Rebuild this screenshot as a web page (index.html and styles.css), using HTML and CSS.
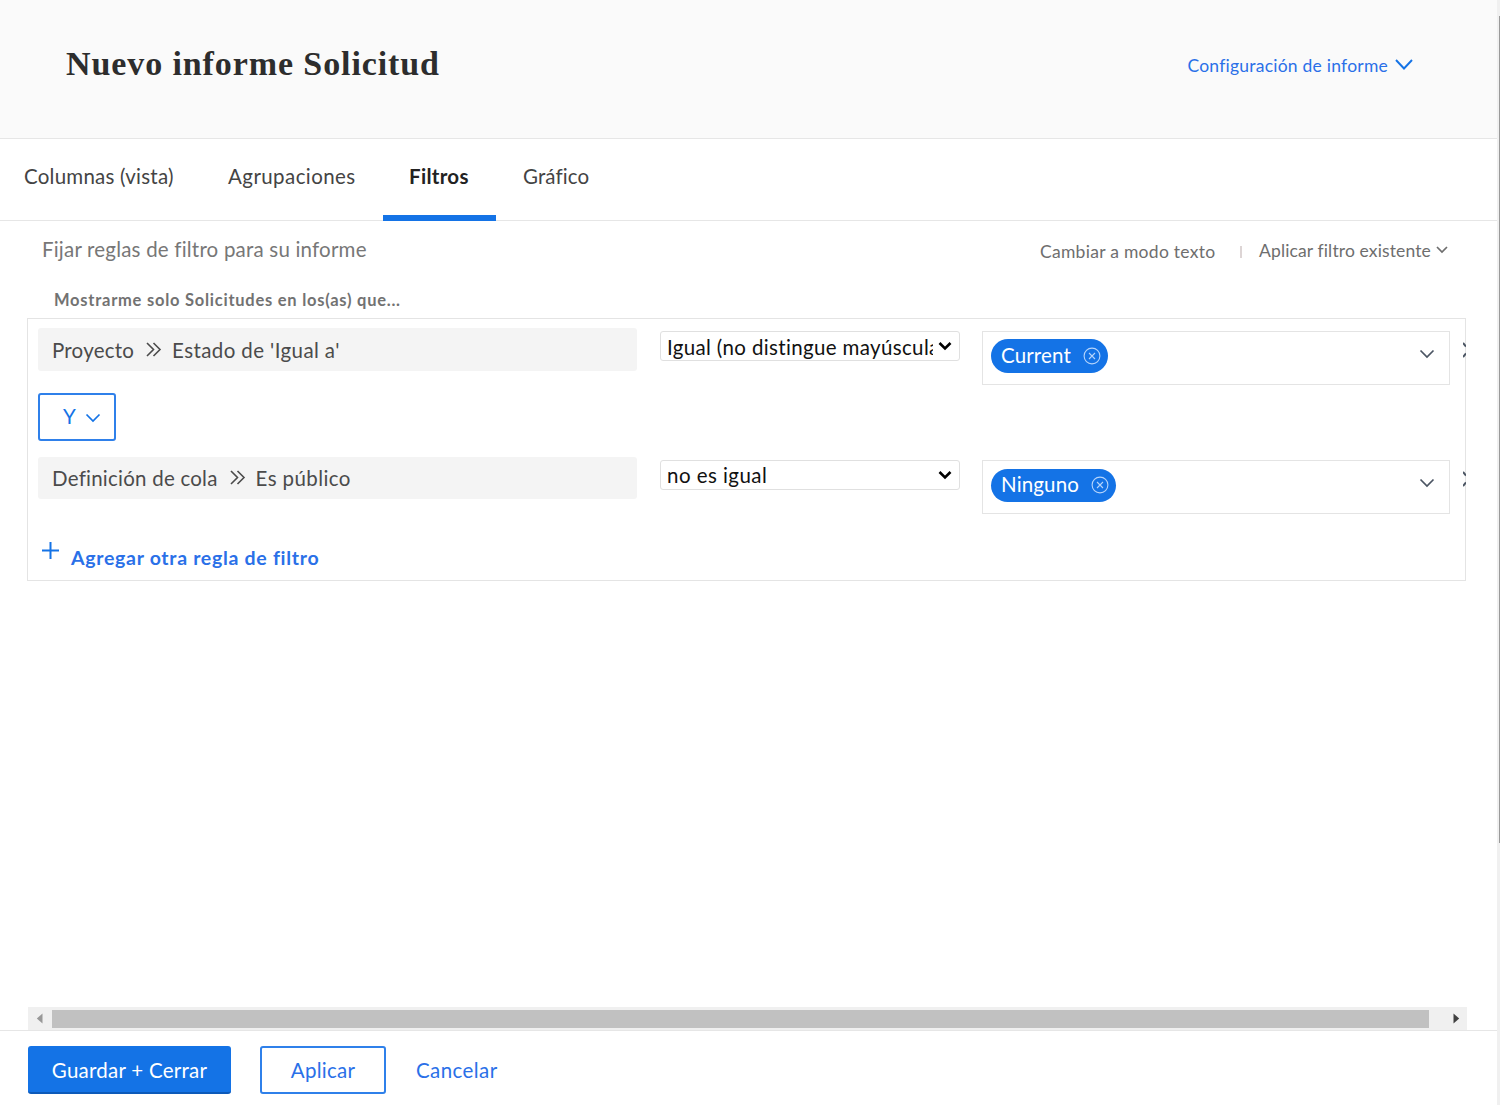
FILE: index.html
```html
<!DOCTYPE html>
<html lang="es">
<head>
<meta charset="utf-8">
<title>Nuevo informe Solicitud</title>
<link rel="stylesheet" href="styles.css">
</head>
<body>
<div class="app">
  <div class="page">
    <header class="header">
      <h1 class="title">Nuevo informe Solicitud</h1>
      <a class="settings"><span>Configuración de informe</span>
        <svg width="18" height="12" viewBox="0 0 18 12"><path d="M1 1l8 8.500L17 1" fill="none" stroke="currentColor" stroke-width="1.9"/></svg></a>
    </header>
    <nav class="tabs">
      <a class="tab tab-columns">Columnas (vista)</a>
      <a class="tab tab-groups">Agrupaciones</a>
      <a class="tab tab-filters active">Filtros</a>
      <a class="tab tab-chart">Gráfico</a>
    </nav>
    <main class="content">
      <div class="intro">
        <p class="intro-text">Fijar reglas de filtro para su informe</p>
        <a class="mode">Cambiar a modo texto</a>
        <i class="divider"></i>
        <a class="existing"><span>Aplicar filtro existente</span>
          <svg width="12" height="8" viewBox="0 0 12 8"><path d="M1 1l5 5 5-5" fill="none" stroke="currentColor" stroke-width="1.7"/></svg></a>
      </div>
      <p class="lead">Mostrarme solo Solicitudes en los(as) que...</p>
      <section class="rules">
        <div class="rule">
          <div class="field"><span class="entity">Proyecto</span>
            <svg class="raquo" width="16" height="15" viewBox="0 0 16 15"><path d="M1 1l6.500 6.500L1 14M7.500 1L14 7.500 7.500 14" fill="none" stroke="currentColor" stroke-width="1.600"/></svg>
            <span class="attribute">Estado de 'Igual a'</span></div>
          <div class="select"><span class="select-text">Igual (no distingue mayúsculas</span>
            <svg width="14" height="10" viewBox="0 0 14 10"><path d="M1.500 2l5.500 5.500L12.500 2" fill="none" stroke="#000" stroke-width="2.600"/></svg></div>
          <div class="value"><div class="chip"><span>Current</span>
            <svg width="18" height="18" viewBox="0 0 18 18" fill="none" stroke="#b5d4fb" stroke-width="1.100"><circle cx="9" cy="9" r="7.900"/><path d="M6 6l6 6M12 6l-6 6"/></svg></div>
            <svg class="value-arrow" width="16" height="10" viewBox="0 0 16 10"><path d="M1.500 1.500L8 8l6.500-6.500" fill="none" stroke="currentColor" stroke-width="1.700"/></svg></div>
          <svg class="remove" width="3" height="16" viewBox="0 0 3 16"><path d="M0 1l3 3.500M0 15l3-3.500" fill="none" stroke="currentColor" stroke-width="2"/></svg>
        </div>
        <button class="operator"><span>Y</span>
          <svg width="16" height="10" viewBox="0 0 16 10"><path d="M1.500 1.500L8 8l6.500-6.500" fill="none" stroke="currentColor" stroke-width="1.700"/></svg></button>
        <div class="rule rule-last">
          <div class="field"><span class="entity">Definición de cola</span>
            <svg class="raquo" width="16" height="15" viewBox="0 0 16 15"><path d="M1 1l6.500 6.500L1 14M7.500 1L14 7.500 7.500 14" fill="none" stroke="currentColor" stroke-width="1.600"/></svg>
            <span class="attribute">Es público</span></div>
          <div class="select"><span class="select-text loose">no es igual</span>
            <svg width="14" height="10" viewBox="0 0 14 10"><path d="M1.500 2l5.500 5.500L12.500 2" fill="none" stroke="#000" stroke-width="2.600"/></svg></div>
          <div class="value"><div class="chip"><span>Ninguno</span>
            <svg width="18" height="18" viewBox="0 0 18 18" fill="none" stroke="#b5d4fb" stroke-width="1.100"><circle cx="9" cy="9" r="7.900"/><path d="M6 6l6 6M12 6l-6 6"/></svg></div>
            <svg class="value-arrow" width="16" height="10" viewBox="0 0 16 10"><path d="M1.500 1.500L8 8l6.500-6.500" fill="none" stroke="currentColor" stroke-width="1.700"/></svg></div>
          <svg class="remove" width="3" height="16" viewBox="0 0 3 16"><path d="M0 1l3 3.500M0 15l3-3.500" fill="none" stroke="currentColor" stroke-width="2"/></svg>
        </div>
        <a class="add"><svg width="17" height="17" viewBox="0 0 17 17"><path d="M8.500 0v17M0 8.500h17" stroke="currentColor" stroke-width="2"/></svg><span>Agregar otra regla de filtro</span></a>
      </section>
      <div class="hscroll">
        <svg width="7" height="11" viewBox="0 0 7 11"><path d="M6.500.5v10L.8 5.500z" fill="#989898"/></svg>
        <div class="hthumb"></div>
        <svg width="7" height="11" viewBox="0 0 7 11"><path d="M.5.5v10l5.700-5z" fill="#404040"/></svg>
      </div>
    </main>
    <footer class="footer">
      <button class="btn primary">Guardar + Cerrar</button>
      <button class="btn outline">Aplicar</button>
      <button class="btn link">Cancelar</button>
    </footer>
  </div>
  <div class="vscroll"><div class="vthumb"></div></div>
</div>
</body>
</html>
```
FILE: styles.css
```css
* { box-sizing: border-box; }
body { margin: 0; background: #fff; color: #4b4b4b; font: 20.5px/26px Lato, "Liberation Sans", sans-serif; letter-spacing: 0.23px; }
h1, p { margin: 0; }
svg { display: block; flex: none; }
span { white-space: nowrap; }
.app { display: flex; width: 1500px; height: 1105px; overflow: hidden; }
.page { width: 1497px; display: flex; flex-direction: column; }

.header { height: 139px; background: #fafafa; border-bottom: 1px solid #e6e6e6; display: flex; justify-content: space-between; padding: 43px 84px 0 66px; }
.title { font: bold 34px/42px "Liberation Serif", serif; color: #2d2d2d; letter-spacing: 0.9px; }
.settings { display: flex; gap: 7px; padding-top: 10px; color: #1473e6; font-size: 17.5px; }
.settings svg { margin-top: 6px; }
.settings span { color: #2a70e8; }

.tabs { height: 82px; border-bottom: 1px solid #e6e6e6; display: flex; color: #444; padding-top: 24px; }
.tab { height: 58px; }
.tab-columns { padding-left: 24px; width: 203px; }
.tab-groups { padding-left: 25px; width: 180px; letter-spacing: 0.42px; }
.tab-filters { padding-left: 26px; width: 113px; border-bottom: 6px solid #1473e6; letter-spacing: 0.3px; }
.tab-chart { padding-left: 27px; letter-spacing: 0.1px; }
.active { font-weight: 700; color: #222; }

.content { height: 809px; padding: 0 30px 0 28px; display: flex; flex-direction: column; }
.intro { display: flex; height: 64px; padding: 15px 16px 0 14px; color: #777; }
.intro-text { width: 998px; letter-spacing: 0.2px; }
.mode, .existing { font-size: 17.5px; color: #6e6e6e; padding-top: 3px; letter-spacing: 0.28px; }
.mode { width: 200px; }
.divider { width: 2px; height: 12px; background: #ddd5d5; margin: 10px 17px 0 0; }
.existing { display: flex; gap: 5px; padding-top: 2px; letter-spacing: 0.13px; }
.existing svg { margin-top: 8px; }
.lead { font-size: 16.5px; font-weight: 700; color: #727272; padding: 2px 0 0 26px; height: 33px; letter-spacing: 0.75px; }

.rules { width: 1439px; height: 263px; margin-left: -1px; border: 1px solid #e4e4e4; padding: 9px 0 0 10px; }
.rule { display: flex; align-items: flex-start; height: 65px; }
.rule-last { height: 85px; }
.field { width: 599px; height: 43px; flex: none; background: #f4f4f4; border-radius: 3px; display: flex; padding: 9px 0 0 14px; margin-right: 23px; }
.rule-last .field { height: 42px; padding-top: 8px; }
.raquo { margin: 5px 10px 0 12px; }
.attribute { letter-spacing: 0.4px; }
.select { width: 300px; height: 30px; flex: none; border: 1px solid #e0e0e0; border-radius: 3px; margin: 3px 22px 0 0; display: flex; padding: 2px 7px 0 6px; justify-content: space-between; color: #111; }
.rule-last .select { padding-top: 1px; }
.select-text { width: 266px; overflow: hidden; letter-spacing: 0.35px; }
.loose { letter-spacing: 0.45px; }
.select svg { margin-top: 7px; }
.rule-last .select svg { margin-top: 8px; }
.value { width: 468px; height: 54px; flex: none; border: 1px solid #e4e4e4; margin: 3px 13px 0 0; padding: 7px 14px 0 8px; display: flex; justify-content: space-between; }
.value-arrow { margin-top: 10px; color: #4b5563; }
.chip { height: 34px; border-radius: 17px; background: #1473e6; color: #fff; display: flex; gap: 12px; padding: 3px 7px 0 10px; letter-spacing: 0.15px; }
.rule-last .chip { height: 33px; margin-top: 1px; padding-top: 2px; }
.chip svg { margin-top: 5px; }
.remove { margin-top: 14px; color: #4b5563; }
.operator { display: flex; width: 78px; height: 48px; border: 2px solid #2f80ea; border-radius: 3px; background: #fff; color: #1473e6; font: inherit; letter-spacing: 0; padding: 8px 0 0 23px; gap: 9px; margin-bottom: 16px; }
.operator svg { margin-top: 10px; }
.add { display: flex; color: #1473e6; font-weight: 700; font-size: 19.5px; padding-left: 4px; gap: 12px; }
.add span { color: #2a70e8; padding-top: 3px; letter-spacing: 0.7px; }

.hscroll { width: 1439px; height: 23px; background: #f0f0f0; margin-top: auto; display: flex; align-items: center; padding: 0 7px 0 8px; justify-content: space-between; }
.hthumb { width: 1377px; height: 18px; background: #c1c1c1; margin-right: 16px; }

.footer { height: 75px; border-top: 1px solid #e6e6e6; padding: 15px 0 0 28px; display: flex; }
.btn { height: 48px; font: inherit; letter-spacing: 0.25px; border-radius: 3px; background: #fff; color: #2a70e8; padding: 0; }
.primary { width: 203px; background: #1473e6; color: #fff; border: 0; border-bottom: 2px solid #0d5ab9; margin-right: 29px; padding-top: 2px; }
.outline { width: 126px; border: 2px solid #2f80ea; margin-right: 30px; }
.link { border: 0; letter-spacing: 0.42px; }

.vscroll { width: 3px; background: #f0f0f0; padding: 16px 0 0 2px; }
.vthumb { height: 827px; background: #9a9a9a; }
```
